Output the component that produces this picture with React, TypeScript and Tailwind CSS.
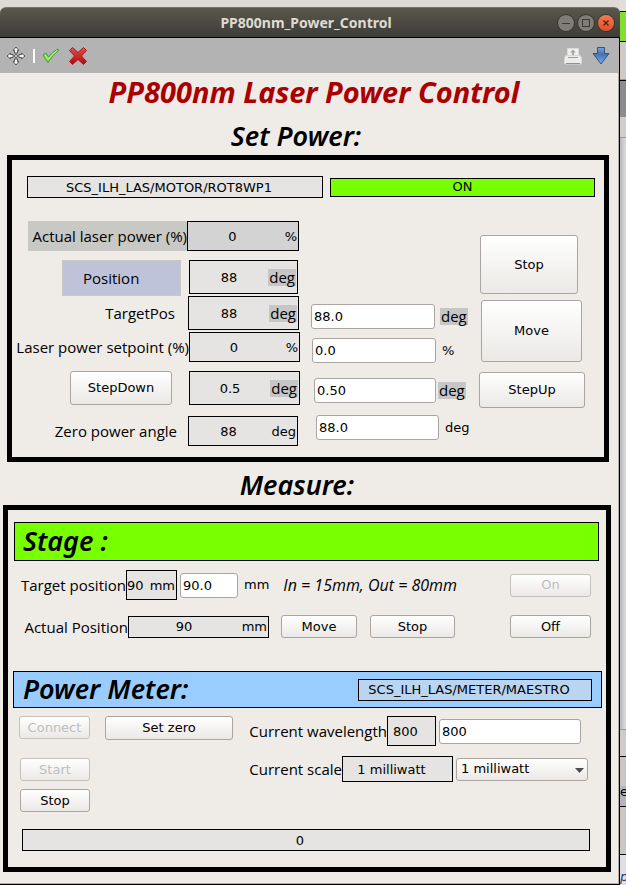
import React, { useState } from "react";
import clsx from "clsx";

const FRAME = "border-[5px] border-black";

function PushButton({
  children,
  className,
  disabled,
}: {
  children: React.ReactNode;
  className?: string;
  disabled?: boolean;
}) {
  return (
    <button
      type="button"
      disabled={disabled}
      className={clsx(
        "shrink-0 rounded-[3px] border bg-linear-to-b from-white to-[#ebe9e6] text-center",
        disabled ? "border-[#c4c0bc] text-[#bebebe]" : "border-[#aaa5a1] text-black",
        className
      )}
    >
      {children}
    </button>
  );
}

function Unit({ children, marked }: { children: React.ReactNode; marked?: boolean }) {
  return (
    <span
      className={clsx(
        marked && "bg-[#c6c6c6] px-px font-['Open_Sans',sans-serif] text-[15px] leading-[17px]"
      )}
    >
      {children}
    </span>
  );
}

function Readout({
  value,
  unit,
  marked,
  align = "text-center",
  className,
}: {
  value: string;
  unit?: string;
  marked?: boolean;
  align?: string;
  className?: string;
}) {
  return (
    <output
      className={clsx(
        "flex shrink-0 items-center border border-black pt-px whitespace-nowrap",
        unit ? "pr-px" : "pr-3",
        className
      )}
    >
      <span className={clsx("flex-1", align)}>{value}</span>
      {unit && (
        <span className={clsx("flex justify-end", unit === "%" ? "w-5" : "w-7")}>
          <Unit marked={marked}>{unit}</Unit>
        </span>
      )}
    </output>
  );
}

function TextField({
  label,
  initial,
  className,
}: {
  label: string;
  initial: string;
  className?: string;
}) {
  const [value, setValue] = useState(initial);
  return (
    <input
      type="text"
      aria-label={label}
      value={value}
      onChange={(e) => setValue(e.target.value)}
      className={clsx(
        "h-[25px] min-w-0 rounded-[3px] border border-[#aaa5a1] bg-white px-[2px] text-black",
        className
      )}
    />
  );
}

function Label({ children, className }: { children: React.ReactNode; className?: string }) {
  return (
    <span
      className={clsx(
        "font-['Open_Sans',sans-serif] text-[15px] whitespace-nowrap",
        className
      )}
    >
      {children}
    </span>
  );
}

function TitleBar() {
  return (
    <header className="flex h-[31px] items-center rounded-t-md border-t border-b border-t-[#74726a] border-b-black bg-linear-to-b from-[#5a574c] to-[#3d3c38] pr-1.5">
      <h1 className="flex-1 pl-[54px] text-center font-['Noto_Sans',sans-serif] text-[14px] font-bold text-[#dfdbd2]">
        PP800nm_Power_Control
      </h1>
      <div className="flex gap-1">
        <button type="button" aria-label="Minimize" className="size-4 rounded-full bg-[#7f7d76] ring-1 ring-[#35342f]">
          <svg viewBox="0 0 16 16" stroke="#3a3934" fill="none">
            <path d="M4 8.5h8" />
          </svg>
        </button>
        <button type="button" aria-label="Maximize" className="size-4 rounded-full bg-[#7f7d76] ring-1 ring-[#35342f]">
          <svg viewBox="0 0 16 16" stroke="#3a3934" fill="none">
            <rect x="4.5" y="4.5" width="7" height="7" />
          </svg>
        </button>
        <button type="button" aria-label="Close" className="size-4 rounded-full bg-linear-to-b from-[#f4784e] to-[#e1501f] ring-1 ring-[#35342f]">
          <svg viewBox="0 0 16 16" stroke="#4a2013" strokeWidth="1.3" fill="none">
            <path d="M5.5 5.5l5 5M10.5 5.5l-5 5" />
          </svg>
        </button>
      </div>
    </header>
  );
}

function Toolbar() {
  return (
    <nav className="flex h-[35px] items-center bg-[#b3b3b3] pr-[9px] pl-1.5">
      <button type="button" aria-label="Move panel">
        <svg width="20" height="20" viewBox="0 0 20 20" fill="#f4f4f2" stroke="#555753" strokeLinejoin="round">
          <path d="M10 1L13 4.5H11.5V7H8.5V4.5H7Z" />
          <path d="M10 19L13 15.5H11.5V13H8.5V15.5H7Z" />
          <path d="M1 10L4.5 7V8.5H7V11.5H4.5V13Z" />
          <path d="M19 10L15.5 7V8.5H13V11.5H15.5V13Z" />
          <circle cx="10" cy="10" r="1.5" />
        </svg>
      </button>
      <span className="ml-[7px] h-3.5 w-0.5 bg-white" />
      <button type="button" aria-label="Apply all" className="ml-[7px]">
        <svg width="18" height="18" viewBox="0 0 18 18">
          <path
            d="M1 8L4 6L6.500 10Q10 5 16 2L16.500 3.500Q10.500 8 6 15.500Z"
            fill="#8ae234"
            stroke="#3c9a50"
            strokeLinejoin="round"
          />
          <path d="M3 8L6.300 12.500Q10 7 15 3.500" fill="none" stroke="#c3f59a" />
        </svg>
      </button>
      <button type="button" aria-label="Discard all" className="ml-2">
        <svg width="20" height="20" viewBox="0 0 20 20">
          <defs>
            <linearGradient id="discard" x1="0" y1="0" x2="0" y2="1">
              <stop offset="0" stopColor="#e05050" />
              <stop offset="1" stopColor="#b30808" />
            </linearGradient>
          </defs>
          <path
            d="M4.500 1.500L10 6.500L15.500 1.500L18.500 4.500L13.500 10L18.500 15.500L15.500 18.500L10 13.500L4.500 18.500L1.500 15.500L6.500 10L1.500 4.500Z"
            fill="url(#discard)"
            stroke="#b21818"
            strokeLinejoin="round"
          />
        </svg>
      </button>
      <div className="flex-1" />
      <button type="button" aria-label="Print">
        <svg width="18" height="18" viewBox="0 0 18 18">
          <path d="M3.500 1.500h11v8h-11z" fill="#efefee" stroke="#dcdcda" />
          <path d="M9 2.500l3 3h-2v3h-2v-3h-2z" fill="#a8a8a5" />
          <path d="M2 8.500h14l1.500 2v5.500q0 1-1 1h-15q-1 0-1-1v-5.500z" fill="#ececeb" stroke="#d8d8d6" />
          <path d="M4 10.500h10" stroke="#9c9c99" />
          <path d="M2 16.500h14" stroke="#90908d" />
        </svg>
      </button>
      <button type="button" aria-label="Download" className="ml-2.5">
        <svg width="18" height="20" viewBox="0 0 18 20">
          <defs>
            <linearGradient id="download" x1="0" y1="0" x2="0" y2="1">
              <stop offset="0" stopColor="#7fa5d6" />
              <stop offset="0.4" stopColor="#4572b0" />
              <stop offset="1" stopColor="#7ab0ea" />
            </linearGradient>
          </defs>
          <path
            d="M5.500 1.500h7v6h4.500L9 18L1 7.500h4.500z"
            fill="url(#download)"
            stroke="#2f5389"
            strokeLinejoin="round"
          />
        </svg>
      </button>
    </nav>
  );
}

function SetPower() {
  return (
    <section className={clsx(FRAME, "mr-[9px] ml-[7px] pt-4 pb-[11px]")}>
      <div className="grid grid-cols-[296fr_265fr] items-center gap-[7px] pr-[9px] pl-[15px]">
        <Readout value="SCS_ILH_LAS/MOTOR/ROT8WP1" className="h-[22px] bg-[#e5e4e2]" />
        <output className="flex h-[19px] items-center justify-center border border-black bg-[#78ff00]">
          ON
        </output>
      </div>

      <div className="mt-[23px] grid grid-cols-[1fr_157px_106px] gap-x-[11px] pr-[19px]">
        {/* Labels and current values */}
        <div className="flex flex-col">
          <div className="flex h-[30px]">
            <Label className="ml-4 flex-1 bg-[#c8c8c5] text-right leading-[30px]">
              Actual laser power (%)
            </Label>
            <Readout value="0" unit="%" className="mr-px w-28 bg-[#d3d3d3]" />
          </div>
          <div className="mt-[9px] flex h-9 justify-end">
            <Label className="mr-2 w-[119px] border border-[#c8c8c5] bg-[#bec3da] pl-5 leading-[34px]">
              Position
            </Label>
            <Readout value="88" unit="deg" marked className="mr-0.5 h-[34px] w-[109px] bg-[#e5e4e2]" />
          </div>
          <div className="flex h-[34px] items-center justify-end">
            <Label className="pr-[13px]">TargetPos</Label>
            <Readout value="88" unit="deg" marked className="mr-px h-full w-[111px] bg-[#e5e4e2]" />
          </div>
          <div className="mt-0.5 flex h-[30px] items-center justify-end">
            <Label>Laser power setpoint (%)</Label>
            <Readout value="0" unit="%" className="h-full w-[111px] bg-[#e5e4e2]" />
          </div>
          <div className="mt-[9px] flex h-[34px] justify-end">
            <PushButton className="mr-[17px] w-[102px]">StepDown</PushButton>
            <Readout value="0.5" unit="deg" marked className="w-[111px] bg-[#e5e4e2]" />
          </div>
          <div className="mt-[11px] flex h-[30px] items-center justify-end">
            <Label className="pr-[11px]">Zero power angle</Label>
            <Readout value="88" unit="deg" className="mr-0.5 h-full w-[110px] bg-[#e5e4e2]" />
          </div>
        </div>

        {/* Setpoints */}
        <div className="flex flex-col pt-[83px]">
          <div className="flex items-center gap-[5px]">
            <TextField label="Target position" initial="88.0" className="w-[124px]" />
            <Unit marked>deg</Unit>
          </div>
          <div className="mt-[9px] ml-px flex items-center gap-1.5">
            <TextField label="Laser power setpoint" initial="0.0" className="w-[124px]" />
            <Unit>%</Unit>
          </div>
          <div className="mt-[15px] ml-[3px] flex items-center gap-0.5">
            <TextField label="Step size" initial="0.50" className="w-[122px]" />
            <Unit marked>deg</Unit>
          </div>
          <div className="mt-3 ml-[5px] flex items-center gap-1.5">
            <TextField label="Zero power angle" initial="88.0" className="w-[123px] shrink-0" />
            <Unit>deg</Unit>
          </div>
        </div>

        <div className="flex flex-col pt-3.5">
          <PushButton className="mr-[7px] ml-px h-[59px]">Stop</PushButton>
          <PushButton className="mt-1.5 mr-[3px] ml-0.5 h-[62px]">Move</PushButton>
          <PushButton className="mt-2.5 h-9">StepUp</PushButton>
        </div>
      </div>
    </section>
  );
}

function Measure() {
  return (
    <section className={clsx(FRAME, "mr-[7px] ml-[3px] pt-3 pb-4")}>
      <h3 className="mr-[7px] ml-1.5 flex h-[39px] items-center border border-black bg-[#78ff00] pb-0.5 pl-2 font-['Noto_Sans',sans-serif] text-[27px] font-semibold italic">
        Stage :
      </h3>
      <div className="mt-[9px] flex h-[30px] items-center pr-[15px]">
        <Label className="w-[118px] text-right">Target position</Label>
        <Readout value="90" unit="mm" align="text-left" className="h-full w-[51px] bg-[#e5e4e2]" />
        <TextField label="Stage target position" initial="90.0" className="ml-[3px] w-[58px]" />
        <span className="ml-1.5">mm</span>
        <span className="ml-3.5 flex-1 font-['Open_Sans',sans-serif] text-[16px] whitespace-nowrap italic">
          In = 15mm, Out = 80mm
        </span>
        <PushButton disabled className="h-[23px] w-[81px]">On</PushButton>
      </div>
      <div className="mt-[15px] flex h-[23px] items-center pr-[15px]">
        <Label className="w-[120px] text-right">Actual Position</Label>
        <Readout value="90" unit="mm" className="h-[22px] w-[141px] bg-[#e5e4e2]" />
        <PushButton className="ml-3 h-[23px] w-[76px]">Move</PushButton>
        <PushButton className="ml-[13px] h-[23px] w-[85px]">Stop</PushButton>
        <PushButton className="ml-auto h-[23px] w-[81px]">Off</PushButton>
      </div>

      <div className="mt-[33px] mr-1 ml-[5px] flex h-[37px] items-center justify-between border border-black bg-[#99ccff] pr-[9px] pl-[9px]">
        <h3 className="pb-0.5 font-['Noto_Sans',sans-serif] text-[27px] font-semibold italic">
          Power Meter:
        </h3>
        <Readout
          value="SCS_ILH_LAS/METER/MAESTRO"
          className="h-[22px] w-[234px] bg-[#bad5f0]"
        />
      </div>
      <div className="mt-2 flex">
        <div className="flex shrink-0 flex-col items-start pl-[11px]">
          <div className="flex gap-[15px]">
            <PushButton disabled className="h-[23px] w-[71px]">Connect</PushButton>
            <PushButton className="h-6 w-32">Set zero</PushButton>
          </div>
          <PushButton disabled className="mt-[18px] ml-px h-[23px] w-[70px]">Start</PushButton>
          <PushButton className="mt-2 ml-px h-[23px] w-[70px]">Stop</PushButton>
        </div>
        <div className="ml-[11px] flex min-w-0 flex-1 flex-col">
          <div className="flex h-[30px] items-center pr-[25px]">
            <Label className="w-[143px] shrink-0 text-right">Current wavelength</Label>
            <Readout value="800" className="h-full w-[49px] bg-[#e5e4e2]" />
            <TextField label="Wavelength" initial="800" className="ml-[3px] flex-1" />
          </div>
          <div className="mt-2.5 flex h-[26px] items-center pr-[18px]">
            <Label className="w-[98px] shrink-0 text-right">Current scale</Label>
            <Readout value="1 milliwatt" className="h-full w-[111px] bg-[#e5e4e2]" />
            <div className="relative ml-[3px] min-w-0 flex-1">
              <select
                aria-label="Scale"
                defaultValue="1 milliwatt"
                className="block h-[23px] w-full appearance-none rounded-[3px] border border-[#aaa5a1] bg-linear-to-b from-white to-[#ebe9e6] pl-1"
              >
                <option>1 milliwatt</option>
                <option>10 milliwatt</option>
              </select>
              <svg
                className="pointer-events-none absolute top-[10px] right-1"
                width="9"
                height="5"
                viewBox="0 0 9 5"
                fill="#4d4d4d"
              >
                <path d="M0 0h9L4.500 5z" />
              </svg>
            </div>
          </div>
        </div>
      </div>
      <Readout value="0" className="mt-[17px] mr-4 ml-3.5 h-[22px] bg-[#e5e4e2]" />
    </section>
  );
}

// Slice of the windows behind, visible along the right edge
function Backdrop() {
  return (
    <aside className="flex w-1.5 shrink-0 flex-col overflow-hidden bg-[#d2d1d4]">
      <div className="h-[11px] bg-[#e2dedb]" />
      <div className="h-[31px] border-y border-black bg-[#82e02c]" />
      <div className="h-[38px] border-b border-[#9b9693] bg-[#cfcac6]" />
      <div className="h-[37px] border-t border-black bg-[#8c8c8e]" />
      <div className="h-[21px] border-b border-[#9b9693] bg-[#d3cecb]" />
      <div className="flex-1 bg-linear-to-r from-[#b8b8bc] to-[#dcdce0]" />
      <div className="h-[27px] border-t border-[#9b9693] bg-[#cfcbc8]" />
      <div className="h-[30px] border-t border-black bg-[#cbc6c2]" />
      <div className="h-5 bg-[#b5b3bd] text-[13px] leading-3">e</div>
      <div className="h-[49px] border-y border-black bg-[#cbc6c2]" />
      <div className="h-[30px] bg-[#dedee2] text-[13px] leading-[44px] text-[#1d3f78] italic">p</div>
    </aside>
  );
}

export default function App() {
  return (
    <div className="flex min-h-screen bg-[#d9d5d1] font-['DejaVu_Sans',sans-serif] text-[13px] leading-4 text-black">
      <div className="flex min-w-0 flex-1 flex-col bg-linear-to-b from-[#dedad6] to-[#cfcbc7] pt-[7px]">
        <TitleBar />
        <div className="flex flex-1 flex-col border-r border-b border-black">
          <Toolbar />
          <main className="flex-1 border-r border-b border-[#b0aca8] bg-[#efebe7] pb-2.5">
            <h2 className="pl-2.5 text-center font-['Noto_Sans',sans-serif] text-[29px] leading-[38px] font-bold text-[#aa0000] italic">
              PP800nm Laser Power Control
            </h2>
            <h2 className="pt-1.5 pr-[26px] text-center font-['Noto_Sans',sans-serif] text-[27px] leading-[38px] font-semibold italic">
              Set Power:
            </h2>
            <SetPower />
            <h2 className="pt-1 pr-6 pb-px text-center font-['Noto_Sans',sans-serif] text-[27px] leading-[38px] font-semibold italic">
              Measure:
            </h2>
            <Measure />
          </main>
        </div>
      </div>
      <Backdrop />
    </div>
  );
}
